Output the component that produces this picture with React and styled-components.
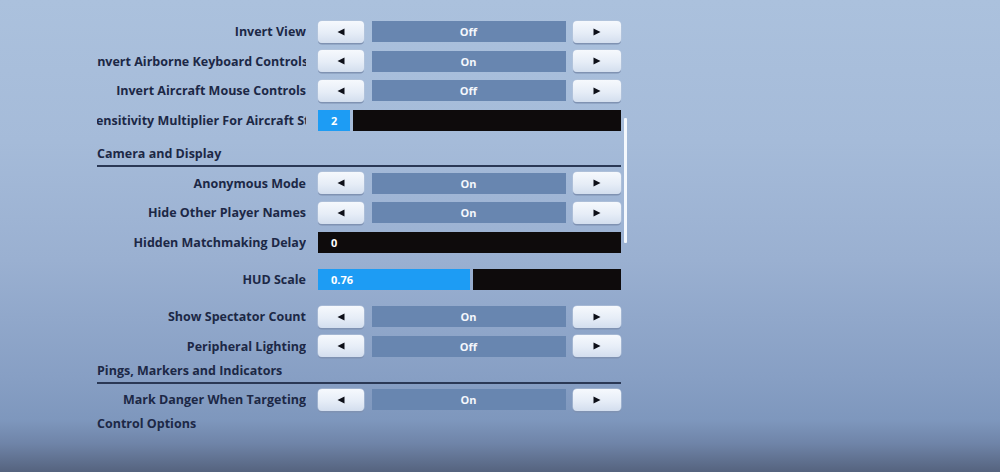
import React from "react";
import styled, { createGlobalStyle } from "styled-components";

const GlobalStyle = createGlobalStyle`
  html, body {
    margin: 0;
    padding: 0;
  }
  body {
    font-family: "Open Sans", "Noto Sans", sans-serif;
  }
`;

const Screen = styled.div`
  width: 1000px;
  height: 472px;
  overflow: hidden;
  background: linear-gradient(
    to bottom,
    #abc1dd 0%,
    #a5bbd9 30%,
    #9ab0d1 55%,
    #879fc4 80%,
    #7e97bd 89%,
    #6f84a8 94%,
    #55637e 100%
  );
`;

const Panel = styled.div`
  position: relative;
  width: 524px;
  margin-left: 97px;
  padding-top: 17px;
  display: flex;
  flex-direction: column;
`;

const Row = styled.div`
  height: 29.5px;
  margin-top: ${p => p.$gap || 0}px;
  display: flex;
  align-items: center;
  gap: 12px;
`;

const Label = styled.div`
  width: 209px;
  flex-shrink: 0;
  display: flex;
  justify-content: ${p => (p.$shift ? "flex-start" : "flex-end")};
  overflow: hidden;
  white-space: nowrap;
  font-size: 12.5px;
  font-weight: 700;
  color: #1c2846;
  span {
    flex-shrink: 0;
    margin-left: ${p => (p.$shift ? -p.$shift : 0)}px;
  }
`;

const Header = styled.div`
  margin-top: ${p => p.$gap || 0}px;
  line-height: 16px;
  padding-bottom: 3px;
  border-bottom: 2px solid ${p => (p.$line ? "#2a3855" : "transparent")};
  font-size: 12.5px;
  font-weight: 700;
  color: #1c2846;
`;

const Toggle = styled.div`
  width: 303px;
  display: grid;
  grid-template-columns: 46px 1fr 48px;
  gap: 7.5px;
  align-items: center;
`;

const ArrowButton = styled.button`
  height: 22px;
  padding: 0;
  border: none;
  border-radius: 4px;
  background: linear-gradient(to bottom, #f6f9fd 0%, #e6edf7 55%, #d3deee 100%);
  box-shadow: 0 1.5px 0 #7f92b2, 0 0 0 0.5px #b9c7dc;
  display: flex;
  align-items: center;
  justify-content: center;
  cursor: pointer;
`;

const Value = styled.div`
  height: 21px;
  background: #6886b0;
  color: #f4f7fc;
  font-size: 11px;
  font-weight: 700;
  display: flex;
  align-items: center;
  justify-content: center;
`;

const Bar = styled.div`
  width: 303px;
  height: 21px;
  display: flex;
  gap: 2.5px;
`;

const Fill = styled.div`
  flex-shrink: 0;
  background: #1d9cf4;
  color: #ffffff;
  font-size: 11px;
  font-weight: 700;
  padding-left: 13px;
  box-sizing: border-box;
  display: flex;
  align-items: center;
`;

const Track = styled.div`
  flex: 1;
  background: #0e0b0c;
  color: #ffffff;
  font-size: 11px;
  font-weight: 700;
  padding-left: ${p => (p.$text ? 13 : 0)}px;
  display: flex;
  align-items: center;
`;

const ScrollBar = styled.div`
  position: absolute;
  left: 527px;
  top: 118px;
  width: 3px;
  height: 125px;
  background: #f4f8fd;
  border-radius: 1px;
`;

const Arrow = ({ dir }) => (
  <svg width="8" height="8" viewBox="0 0 8 8">
    {dir === "left" ? (
      <polygon points="7.5,0.5 7.5,7.5 0.5,4" fill="#0d0f18" />
    ) : (
      <polygon points="0.5,0.5 0.5,7.5 7.5,4" fill="#0d0f18" />
    )}
  </svg>
);

const ToggleRow = ({ label, value, gap, shift }) => (
  <Row $gap={gap}>
    <Label $shift={shift}>
      <span>{label}</span>
    </Label>
    <Toggle>
      <ArrowButton>
        <Arrow dir="left" />
      </ArrowButton>
      <Value>{value}</Value>
      <ArrowButton>
        <Arrow dir="right" />
      </ArrowButton>
    </Toggle>
  </Row>
);

const SliderRow = ({ label, value, fill, gap, shift }) => (
  <Row $gap={gap}>
    <Label $shift={shift}>
      <span>{label}</span>
    </Label>
    <Bar>
      {fill ? <Fill style={{ width: fill }}>{value}</Fill> : null}
      <Track $text={!fill}>{fill ? "" : value}</Track>
    </Bar>
  </Row>
);

export default function App() {
  return (
    <Screen>
      <GlobalStyle />
      <Panel>
        <ToggleRow label="Invert View" value="Off" />
        <ToggleRow label="Invert Airborne Keyboard Controls" value="On" shift={4} />
        <ToggleRow label="Invert Aircraft Mouse Controls" value="Off" />
        <SliderRow
          label="Sensitivity Multiplier For Aircraft Steering"
          value="2"
          fill={32}
          shift={8}
        />
        <Header $gap={10.5} $line>
          Camera and Display
        </Header>
        <ToggleRow label="Anonymous Mode" value="On" gap={2} />
        <ToggleRow label="Hide Other Player Names" value="On" />
        <SliderRow label="Hidden Matchmaking Delay" value="0" />
        <SliderRow label="HUD Scale" value="0.76" fill={152} gap={7.75} />
        <ToggleRow label="Show Spectator Count" value="On" gap={7.5} />
        <ToggleRow label="Peripheral Lighting" value="Off" />
        <Header $gap={2} $line>
          Pings, Markers and Indicators
        </Header>
        <ToggleRow label="Mark Danger When Targeting" value="On" gap={1} />
        <Header $gap={2}>Control Options</Header>
        <ScrollBar />
      </Panel>
    </Screen>
  );
}
